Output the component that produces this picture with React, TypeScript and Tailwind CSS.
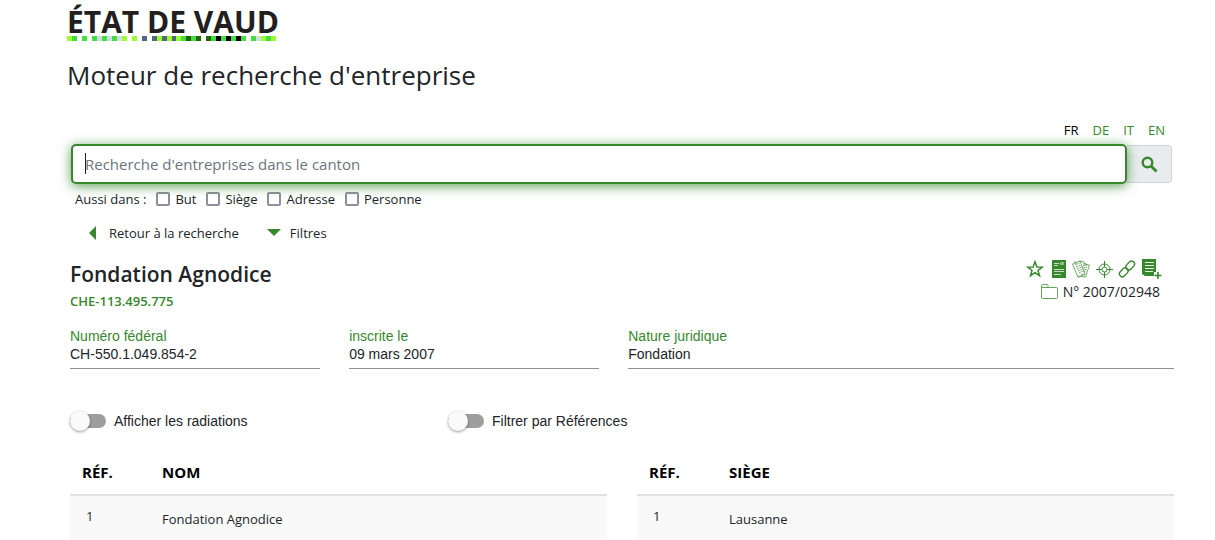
import type { ReactNode } from "react";

const BAND = "LG.G.GSGSGSL.L.D.DLDLDLGFGF.FGKGKGKG.GSLGL";
const BAND_COLORS: Record<string, string> = {
  L: "#99ff33",
  G: "#44dd44",
  S: "#d3dbe0",
  D: "#55667a",
  F: "#226600",
  K: "#000000",
};

function Logo() {
  return (
    <a href="#accueil" className="block w-[209px] text-[#231f20]">
      <span className="block whitespace-nowrap font-['Open_Sans',sans-serif] text-[30px] font-bold leading-[29px]">ÉTAT DE VAUD</span>
      <svg viewBox="0 0 42 1" preserveAspectRatio="none" className="block h-[5px] w-full" aria-hidden="true">
        {BAND.split("").map((c, i) =>
          c === "." ? null : <rect key={i} x={i} y="0" width="1" height="1" fill={BAND_COLORS[c]} shapeRendering="crispEdges" />,
        )}
      </svg>
    </a>
  );
}

function IconButton({ label, children }: { label: string; children: ReactNode }) {
  return (
    <button type="button" aria-label={label} className="flex h-5 w-5 items-center justify-center text-[#37872d]">
      {children}
    </button>
  );
}

function Actions() {
  return (
    <div className="flex items-center gap-[3px]">
      <IconButton label="Ajouter aux favoris">
        <svg width="18" height="18" viewBox="0 0 18 18" fill="none" stroke="currentColor" strokeWidth="1.5">
          <path d="M9 1.8 10.9 6.9 16.3 7.1 12 10.5 13.5 15.7 9 12.7 4.5 15.7 6 10.5 1.7 7.1 7.1 6.9Z" />
        </svg>
      </IconButton>
      <IconButton label="Extrait">
        <svg width="16" height="18" viewBox="0 0 16 18">
          <path d="M2 0h14v18H2z" fill="currentColor" />
          <path d="M4 3.500h5M4 5.500h4M4 9.500h10M4 11.500h10M4 14.500h7" stroke="#c4dfc0" strokeWidth="1" />
          <path d="M10 2h4v3h-4z" fill="#8fc088" />
        </svg>
      </IconButton>
      <IconButton label="Documents">
        <svg width="18" height="18" viewBox="0 0 18 18" fill="none" stroke="currentColor" strokeWidth="0.7">
          <path d="M.5 4 8 1l5 13-7 3.500ZM7 2l1-1 4 1v2l5.500 1-4 12-7-1" />
          <path d="m3 5 5-2M4 7l5-2M5 9l5-2M6 11l5-2M7 13l4-2M11 5l4 1M11 7l4 1M12 9l3 1M12 11l2 1M9 14l4 1" strokeDasharray="2 .6" />
          <path d="M2 2h2v2M13 3l2 2" />
        </svg>
      </IconButton>
      <IconButton label="Localiser">
        <svg width="17" height="17" viewBox="0 0 17 17" fill="none" stroke="currentColor" strokeWidth="1">
          <circle cx="8.5" cy="8.5" r="5.5" />
          <circle cx="8.5" cy="8.5" r="2.5" />
          <path d="M8.500 0v6M8.500 11v6M0 8.500h6M11 8.500h6" />
        </svg>
      </IconButton>
      <IconButton label="Copier le lien">
        <svg width="18" height="18" viewBox="0 0 18 18" fill="none" stroke="currentColor" strokeWidth="1.300">
          <rect x="-5" y="-3" width="10" height="6" rx="3" transform="translate(12.200 5.500) rotate(-47)" />
          <rect x="-5" y="-3" width="10" height="6" rx="3" transform="translate(5.800 12.300) rotate(-47)" />
        </svg>
      </IconButton>
      <button type="button" aria-label="Ajouter un document" className="ml-[2px] flex h-5 w-5 items-center justify-center text-[#37872d]">
        <svg width="20" height="20" viewBox="0 0 20 20">
          <path d="M0 0h14v13h-2v4H3l-3-2z" fill="currentColor" />
          <path d="M3 3.500h9M3 6.500h9M3 9.500h9M3 12.500h8" stroke="#fff" strokeWidth=".9" />
          <path d="M16 13v7M12.500 16.500h7" stroke="currentColor" strokeWidth="1.600" />
        </svg>
      </button>
    </div>
  );
}

function Field({ label, value }: { label: string; value: string }) {
  return (
    <div className="border-b border-[#8f8f8f] pb-[5px] font-['Liberation_Sans',sans-serif] text-[14px] leading-[18px]">
      <dt className="text-[#37872d]">{label}</dt>
      <dd>{value}</dd>
    </div>
  );
}

function Toggle({ label }: { label: string }) {
  return (
    <label className="flex items-center gap-2 font-['Liberation_Sans',sans-serif] text-[14px] leading-5">
      <input
        type="checkbox"
        role="switch"
        className="flex h-[14px] w-9 appearance-none items-center rounded-full bg-[#9e9e9e] before:h-5 before:w-5 before:rounded-full before:bg-[#fafafa] before:shadow-[0_1px_3px_rgba(0,0,0,0.4)] checked:justify-end"
      />
      {label}
    </label>
  );
}

function Results({ heading, value }: { heading: string; value: string }) {
  return (
    <table className="w-full border-collapse text-left">
      <thead>
        <tr className="border-b-2 border-[#dee2e6] text-[15px] leading-6 text-black">
          <th className="w-20 px-3 pb-[10px] font-bold">RÉF.</th>
          <th className="px-3 pb-[10px] font-bold">{heading}</th>
        </tr>
      </thead>
      <tbody>
        <tr className="bg-[#f9f9f9] text-[13px] leading-5">
          <td className="px-4 pb-[18px] pt-[10px] align-top">1</td>
          <td className="px-3 pb-[11px] pt-[13px] align-top">{value}</td>
        </tr>
      </tbody>
    </table>
  );
}

const LANGS = ["FR", "DE", "IT", "EN"];
const SCOPES = ["But", "Siège", "Adresse", "Personne"];

export default function App() {
  return (
    <div className="overflow-hidden bg-white pl-[70px] pr-[41px] pt-[7px] font-['Open_Sans',sans-serif] text-[#212529]">
      <header className="-ml-[3px]">
        <Logo />
        <h1 className="mt-[17px] text-[26px] leading-[34px]">Moteur de recherche d'entreprise</h1>
      </header>

      <nav aria-label="Langue" className="mr-[9px] mt-7 flex justify-end gap-[14px] text-[13px] leading-5">
        {LANGS.map((l) => (
          <a key={l} href={"#" + l.toLowerCase()} className={l === "FR" ? "text-black" : "text-[#37872d]"}>
            {l}
          </a>
        ))}
      </nav>

      <form className="ml-px mr-[2px] mt-1" onSubmit={(e) => e.preventDefault()}>
        <div className="flex items-center">
          <div className="relative flex-1">
            <input
              type="search"
              aria-label="Recherche d'entreprises dans le canton"
              placeholder="Recherche d'entreprises dans le canton"
              className="block h-10 w-full rounded-[5px] border-2 border-[#37872d] bg-white px-3 text-[15px] shadow-[0_2px_12px_rgba(55,135,45,0.8)] outline-none placeholder:text-[#6c757d]"
            />
            <span className="absolute left-[14px] top-[9px] h-[21px] w-px bg-[#212529]" />
          </div>
          <button type="submit" aria-label="Rechercher" className="flex h-[38px] w-[45px] items-center justify-center rounded-r border border-l-0 border-[#ced4da] bg-[#e9ecef] text-[#37872d]">
            <svg width="17" height="17" viewBox="0 0 17 17" fill="none" stroke="currentColor" strokeWidth="2.4">
              <circle cx="6.5" cy="6.5" r="4.8" />
              <path d="m10 10 5.500 5.500" strokeWidth="2.8" />
            </svg>
          </button>
        </div>
        <fieldset className="ml-1 mt-[5px] flex items-center gap-[10px] text-[13px] leading-5">
          <span>Aussi dans :</span>
          {SCOPES.map((s) => (
            <label key={s} className="flex items-center gap-[5px]">
              <input type="checkbox" className="h-[14px] w-[14px] appearance-none rounded-[2px] border-2 border-[#8f8f9d] bg-white checked:bg-[#37872d]" />
              {s}
            </label>
          ))}
        </fieldset>
      </form>

      <div className="ml-[18px] mt-[14px] flex items-center gap-7 text-[13px] leading-5">
        <button type="button" className="flex items-center gap-3">
          <svg width="9" height="14" viewBox="0 0 9 14" fill="#37872d"><path d="M8 0v14L1 7z" /></svg>
          Retour à la recherche
        </button>
        <button type="button" className="flex items-center gap-[9px]">
          <svg width="14" height="8" viewBox="0 0 14 8" fill="#37872d"><path d="M0 0h14L7 7z" /></svg>
          Filtres
        </button>
      </div>

      <section className="mt-[15px] flex justify-between">
        <div>
          <h2 className="text-[21px] font-semibold leading-8">Fondation Agnodice</h2>
          <p className="text-[13px] font-semibold leading-[22px] text-[#37872d]">CHE-113.495.775</p>
        </div>
        <div className="mr-3 mt-px flex flex-col items-end">
          <Actions />
          <p className="mr-[2px] mt-[3px] flex items-center gap-[5px] text-[14px] leading-5">
            <svg width="17" height="16" viewBox="0 0 17 16" fill="none" stroke="#65a35e" strokeWidth="1"><path d="M.5 14V2Q.5.5 2 .5h4q1 0 1 1v2h8.500q1 0 1 1v9q0 1-1 1H1.500q-1 0-1-1M.5 3.500h7" /></svg>
            N° 2007/02948
          </p>
        </div>
      </section>

      <dl className="mt-[15px] grid grid-cols-[11fr_11fr_24fr] gap-[29px]">
        <Field label="Numéro fédéral" value="CH-550.1.049.854-2" />
        <Field label="inscrite le" value="09 mars 2007" />
        <Field label="Nature juridique" value="Fondation" />
      </dl>

      <div className="mt-[42px] grid grid-cols-[378fr_726fr]">
        <Toggle label="Afficher les radiations" />
        <Toggle label="Filtrer par Références" />
      </div>

      <div className="mt-[29px] grid grid-cols-2 gap-[30px]">
        <Results heading="NOM" value="Fondation Agnodice" />
        <Results heading="SIÈGE" value="Lausanne" />
      </div>
    </div>
  );
}
